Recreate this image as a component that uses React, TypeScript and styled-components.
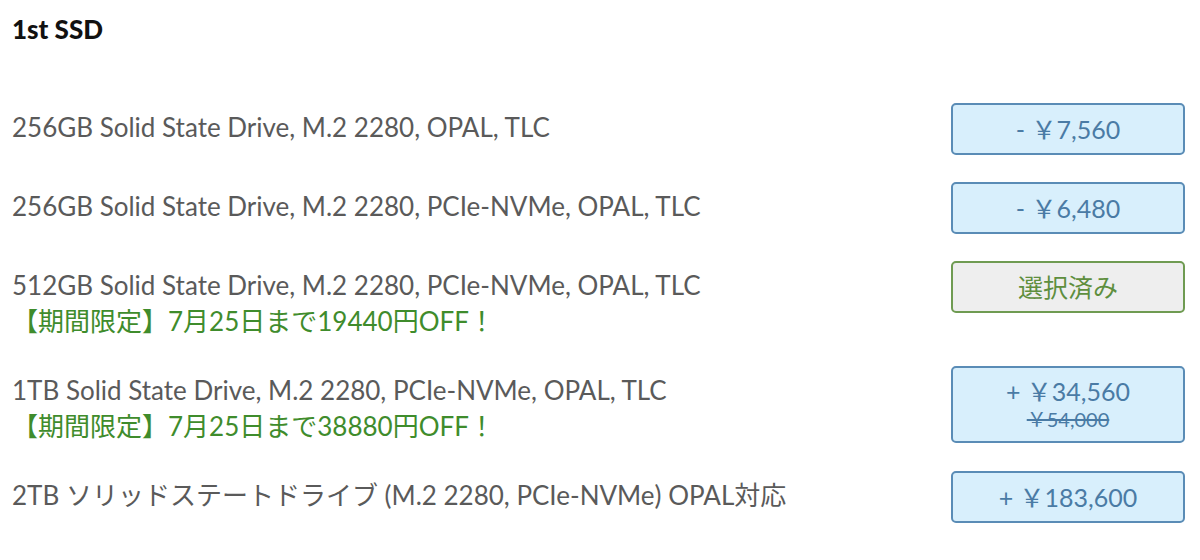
import React from "react";
import styled, { createGlobalStyle } from "styled-components";

const GlobalStyle = createGlobalStyle`
  body {
    margin: 0;
    background: #fff;
    font-family: Lato, "Noto Sans CJK JP", sans-serif;
  }
`;

type Option = {
  name: string;
  promo?: string;
  price?: string;
  oldPrice?: string;
  selected?: boolean;
};

const options: Option[] = [
  { name: "256GB Solid State Drive, M.2 2280, OPAL, TLC", price: "- ￥7,560" },
  { name: "256GB Solid State Drive, M.2 2280, PCIe-NVMe, OPAL, TLC", price: "- ￥6,480" },
  {
    name: "512GB Solid State Drive, M.2 2280, PCIe-NVMe, OPAL, TLC",
    promo: "【期間限定】7月25日まで19440円OFF！",
    selected: true,
  },
  {
    name: "1TB Solid State Drive, M.2 2280, PCIe-NVMe, OPAL, TLC",
    promo: "【期間限定】7月25日まで38880円OFF！",
    price: "+ ￥34,560",
    oldPrice: "￥54,000",
  },
  { name: "2TB ソリッドステートドライブ (M.2 2280, PCIe-NVMe) OPAL対応", price: "+ ￥183,600" },
];

export default function App() {
  return (
    <>
      <GlobalStyle />
      <Section>
        <Title>1st SSD</Title>
        <List>
          {options.map((o) => (
            <Row key={o.name}>
              <Info>
                <Name>{o.name}</Name>
                {o.promo && <Promo>{o.promo}</Promo>}
              </Info>
              <PriceButton $selected={o.selected}>
                {o.selected ? "選択済み" : o.price}
                {o.oldPrice && <OldPrice>{o.oldPrice}</OldPrice>}
              </PriceButton>
            </Row>
          ))}
        </List>
      </Section>
    </>
  );
}

const Section = styled.div`
  padding: 14px 15px 0 12px;
`;

const Title = styled.h2`
  margin: 0;
  font-size: 26px;
  font-weight: 900;
  color: #111;
  line-height: 30px;
`;

const List = styled.div`
  display: flex;
  flex-direction: column;
  gap: 27px;
  margin-top: 59px;
`;

const Row = styled.div`
  display: flex;
  justify-content: space-between;
  align-items: flex-start;
`;

const Info = styled.div`
  padding-top: 6px;
  font-size: 26px;
  line-height: 36px;
`;

const Name = styled.div`
  color: #5a5a5a;
`;

const Promo = styled.div`
  color: #3f8c2c;
`;

const PriceButton = styled.div<{ $selected?: boolean }>`
  width: 234px;
  min-height: 52px;
  box-sizing: border-box;
  display: flex;
  flex-direction: column;
  align-items: center;
  justify-content: center;
  padding: 8px 0 9px;
  border-radius: 5px;
  border: 2px solid ${(p) => (p.$selected ? "#6f9b52" : "#5a8cb6")};
  background: ${(p) => (p.$selected ? "#eeeeee" : "#d8effc")};
  color: ${(p) => (p.$selected ? "#5e8f3e" : "#4a7ba5")};
  font-size: 25px;
  line-height: 30px;
`;

const OldPrice = styled.span`
  font-size: 20px;
  line-height: 26px;
  text-decoration: line-through;
`;
